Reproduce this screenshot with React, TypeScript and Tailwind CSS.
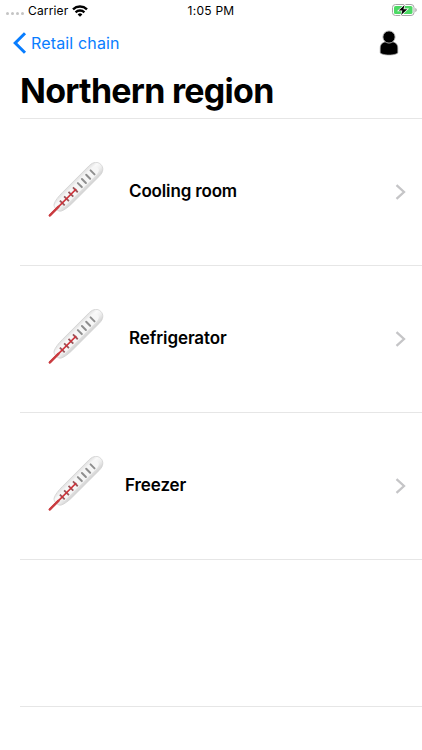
import { clsx } from 'clsx'

const rooms = [
  { id: 'cooling-room', name: 'Cooling room', offset: 'ml-[25px]', tracking: 'tracking-[-0.15px]' },
  { id: 'refrigerator', name: 'Refrigerator', offset: 'ml-[25px]', tracking: 'tracking-[-0.1px]' },
  { id: 'freezer', name: 'Freezer', offset: 'ml-[21px]', tracking: 'tracking-[-0.1px]' },
]

function WifiIcon() {
  return (
    <svg width="16" height="12" viewBox="0 0 16 12" fill="none" stroke="#000" strokeWidth="2.4">
      <path d="M1 4.3a10.2 10.2 0 0 1 14 0" />
      <path d="M3.6 7.3a6.4 6.4 0 0 1 8.8 0" />
      <path d="M8 11.8 5.6 9.4a3.5 3.5 0 0 1 4.8 0Z" fill="#000" stroke="none" />
    </svg>
  )
}

function BatteryIcon() {
  return (
    <svg width="26" height="12" viewBox="0 0 26 12">
      <rect x="0.5" y="0.5" width="21.5" height="11" rx="3" fill="#fff" stroke="#a6a6a6" />
      <rect x="2" y="2" width="18.5" height="8" rx="1.6" fill="#4cd964" />
      <path d="M23.3 4v4c.9-.3 1.4-1.1 1.4-2s-.5-1.7-1.4-2Z" fill="#a6a6a6" />
      <path
        d="M12.6.9 6.7 6.6h3.7L9.1 11.1l6.2-5.8h-3.9Z"
        fill="#000"
        stroke="#fff"
        strokeWidth="1.4"
        paintOrder="stroke"
      />
    </svg>
  )
}

function PersonIcon() {
  return (
    <svg width="20" height="26" viewBox="0 0 20 26">
      <path
        d="M10 11.5c5 0 8.8 1.5 8.8 6.5v4.5c0 1.2-3.8 2.5-8.8 2.5s-8.8-1.3-8.8-2.5V18c0-5 3.8-6.5 8.8-6.5Z"
        fill="#000"
        stroke="#a3a3a3"
        strokeWidth="0.7"
      />
      <circle cx="10" cy="7" r="6.1" fill="#000" stroke="#b5b5b5" strokeWidth="0.9" />
    </svg>
  )
}

function ThermometerIcon() {
  return (
    <svg width="56" height="56" viewBox="0 0 56 56" className="shrink-0">
      <defs>
        <linearGradient id="glass" x1="0" y1="0" x2="0" y2="1">
          <stop offset="0" stopColor="#e0e0e0" />
          <stop offset="0.3" stopColor="#fafafa" />
          <stop offset="0.65" stopColor="#ededed" />
          <stop offset="1" stopColor="#d2d2d2" />
        </linearGradient>
      </defs>
      {/* drawn lying down with the tip at the origin, then tilted */}
      <g transform="translate(1.2 54) rotate(-45)">
        <path
          d="M12-5C15-6.6 20-7.3 26-7.3h38c5.500 0 9 3.2 9 7.3s-3.500 7.300-9 7.300H26c-6 0-11-.7-14-2.300-3-1.600-3-8.400 0-10Z"
          fill="url(#glass)"
          stroke="#d2d2d2"
          strokeWidth="0.8"
        />
        <path d="M17-4.200h46c3.500 0 5.500 1.800 5.500 4.200s-2 4.200-5.500 4.200H17Z" fill="#f6f6f6" />
        <path d="M18.500-3.400v6.800M24.500-3.400v6.800M30.700-3.400v6.800M37-3.400v6.800" stroke="#96575c" strokeWidth="1.8" />
        <path
          d="M43.500-3v5.600M49.300-3v5.600M55.300-3v5.600M61.500-3v5.600"
          stroke="#8e8e8e"
          strokeWidth="2"
          strokeLinecap="round"
        />
        <path d="M.5 0h37" stroke="#cf3038" strokeWidth="1.7" strokeLinecap="round" />
        <path d="M1 0h12" stroke="#c93c40" strokeWidth="2.4" strokeLinecap="round" />
      </g>
    </svg>
  )
}

function StatusBar() {
  return (
    <div className="grid h-5 shrink-0 grid-cols-3 items-center pl-[6px] pr-[4px] text-[12px] text-black">
      <div className="flex items-center pt-px">
        <div className="mr-[4px] mt-[6px] flex gap-[2px]">
          {[0, 1, 2, 3].map((dot) => (
            <span key={dot} className="size-[3px] rounded-full bg-[#c4c4c4]" />
          ))}
        </div>
        <span className="tracking-[0.15px]">Carrier</span>
        <span className="ml-[4px]">
          <WifiIcon />
        </span>
      </div>
      <span className="pr-[2px] pt-px text-center tracking-[0.25px]">1:05 PM</span>
      <div className="flex justify-end">
        <BatteryIcon />
      </div>
    </div>
  )
}

export default function App() {
  return (
    <div className="flex h-[750px] w-full flex-col overflow-hidden bg-white font-['Inter','Liberation_Sans',sans-serif]">
      <StatusBar />

      {/* Navigation bar */}
      <header className="flex h-[46px] shrink-0 items-center justify-between pl-[13px] pr-[23px]">
        <button className="flex items-center gap-[4px] text-[16px] tracking-[0.15px] text-[#087dff]">
          <svg width="14" height="22" viewBox="0 0 14 22" fill="none" stroke="currentColor" strokeWidth="3">
            <path d="M12 1.3 2.2 11 12 20.7" />
          </svg>
          <span>Retail chain</span>
        </button>
        <button aria-label="Account">
          <PersonIcon />
        </button>
      </header>

      <h1 className="h-[52px] shrink-0 pl-[20px] pt-[4px] text-[34px] leading-[42px] font-bold tracking-[-0.73px] text-black">
        Northern region
      </h1>

      {/* Room list */}
      <ul className="ml-5 border-t border-[#e6e6e6]">
        {rooms.map((room) => (
          <li key={room.id} className="flex h-[147px] items-center border-b border-[#e6e6e6] pl-7 pr-[16px]">
            <div className="pb-[4px]">
              <ThermometerIcon />
            </div>
            <span className={clsx('text-[17px] font-semibold text-black', room.offset, room.tracking)}>
              {room.name}
            </span>
            <svg className="mb-px ml-auto" width="11" height="16" viewBox="0 0 11 16" fill="none" stroke="#c5c5c7" strokeWidth="2.3">
              <path d="M1.5 1.2 9 8l-7.5 6.8" />
            </svg>
          </li>
        ))}
        <li className="h-[147px] border-b border-[#e6e6e6]" />
      </ul>
    </div>
  )
}
